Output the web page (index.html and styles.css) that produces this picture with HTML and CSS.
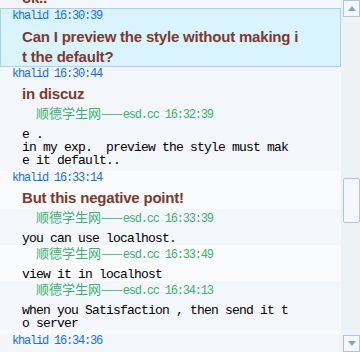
FILE: index.html
```html
<!DOCTYPE html>
<html lang="en">
<head>
    <meta charset="UTF-8">
    <title>khalid - discuz thread</title>
    <link rel="stylesheet" href="styles.css">
</head>
<body>
    <div class="frame">
        <div class="list">
            <div class="msg cut">
                <div class="title">ok..</div>
            </div>

            <div class="msg current">
                <div class="name">khalid 16:30:39</div>
                <div class="title">Can I preview the style without making i<br>t the default?</div>
            </div>

            <div class="msg">
                <div class="name">khalid 16:30:44</div>
                <div class="title">in discuz</div>
                <div class="reply odd">
                    <div class="src"><span class="cn">顺德学生网——</span>esd.cc 16:32:39</div>
                    <div class="body">e .
in my exp.  preview the style must make it default..</div>
                </div>
            </div>

            <div class="msg light">
                <div class="name">khalid 16:33:14</div>
                <div class="title">But this negative point!</div>
                <div class="reply odd">
                    <div class="src"><span class="cn">顺德学生网——</span>esd.cc 16:33:39</div>
                    <div class="body">you can use localhost.</div>
                </div>
                <div class="reply">
                    <div class="src"><span class="cn">顺德学生网——</span>esd.cc 16:33:49</div>
                    <div class="body">view it in localhost</div>
                </div>
                <div class="reply odd">
                    <div class="src"><span class="cn">顺德学生网——</span>esd.cc 16:34:13</div>
                    <div class="body">when you Satisfaction , then send it to server</div>
                </div>
            </div>

            <div class="msg">
                <div class="name">khalid 16:34:36</div>
            </div>
        </div>

        <div class="scrollbar">
            <div class="sb-btn">
                <svg width="8" height="5" viewBox="0 0 8 5"><path d="M0 5 L4 0 L8 5 Z" fill="#7ba5d6"/></svg>
            </div>
            <div class="sb-track">
                <div class="sb-thumb"></div>
            </div>
            <div class="sb-btn">
                <svg width="8" height="5" viewBox="0 0 8 5"><path d="M0 0 L8 0 L4 5 Z" fill="#7ba5d6"/></svg>
            </div>
        </div>
    </div>
</body>
</html>
```

FILE: styles.css
```css
body {
    margin: 0;
    padding: 0;
    background-color: #f3f6fa;
}
.frame {
    display: flex;
    width: 360px;
    height: 352px;
    overflow: hidden;
}
.list {
    width: 341px;
    height: 352px;
    overflow: hidden;
    flex-shrink: 0;
}
.msg {
    padding-bottom: 4px;
    background-color: #f3f6fa;
}
.msg.light {
    background-color: #f9fbfc;
}
.msg.cut {
    padding-bottom: 0;
}
.msg.cut .title {
    margin-top: -12px;
    margin-bottom: 0;
}
.msg.current {
    padding-bottom: 0;
    background-color: #daf4ff;
    border: 1px solid #a8d1ec;
}
.name {
    padding-left: 12px;
    height: 14px;
    line-height: 14px;
    font-family: "Liberation Mono", monospace;
    font-size: 12px;
    letter-spacing: -1.2px;
    color: #1570e8;
}
.msg.current .name {
    padding-left: 11px;
}
.title {
    margin: 3px 0 1px 22px;
    max-width: 300px;
    font-family: "Liberation Sans", Arial, sans-serif;
    font-size: 15px;
    font-weight: bold;
    letter-spacing: -0.2px;
    line-height: 20px;
    color: #7d3a2d;
    word-break: break-all;
}
.msg.current .title {
    margin: 4px 0 -1px 21px;
}
.reply {
    padding: 1px 0 0;
}
.reply.odd {
    background-color: #f3f6fa;
}
.src {
    height: 14px;
    line-height: 14px;
    padding-left: 36px;
    font-family: "Liberation Mono", monospace;
    font-size: 12px;
    letter-spacing: -1.2px;
    color: #3bb372;
    white-space: nowrap;
}
.src .cn {
    font-family: "Noto Sans CJK SC", sans-serif;
    font-size: 13px;
    letter-spacing: 0;
}
.body {
    margin: 8px 0 0 22px;
    width: 270px;
    font-family: "Liberation Mono", monospace;
    font-size: 13px;
    letter-spacing: -0.8px;
    line-height: 13px;
    color: #000;
    white-space: pre-wrap;
    word-break: break-all;
}
.scrollbar {
    width: 19px;
    height: 352px;
    display: flex;
    flex-direction: column;
    background-color: #edf2f7;
}
.sb-btn {
    width: 15px;
    height: 15px;
    margin-left: 2px;
    border: 1px solid #b3c4da;
    background-color: #f4f8fc;
    display: flex;
    align-items: center;
    justify-content: center;
}
.sb-track {
    flex: 1;
}
.sb-thumb {
    width: 15px;
    height: 43px;
    margin: 161px 0 0 2px;
    border: 1px solid #b3c4da;
    border-radius: 2px;
    background-color: #f3f7fc;
}
```
